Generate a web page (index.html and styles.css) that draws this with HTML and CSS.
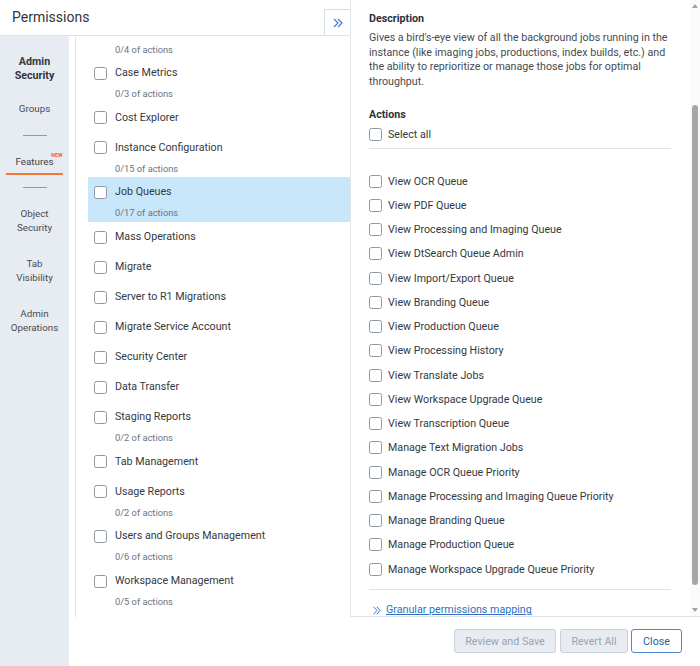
FILE: index.html
```html
<!DOCTYPE html>
<html lang="en">
<head>
<meta charset="utf-8">
<title>Permissions</title>
<link rel="stylesheet" href="styles.css">
</head>
<body>
<div class="app">
  <header class="top">
    <h1 class="title">Permissions</h1>
    <button class="collapse" aria-label="Collapse">
      <svg width="10" height="10" viewBox="0 0 10 10"><path d="M1 1 L5 5 L1 9 M5 1 L9 5 L5 9" fill="none" stroke="#3b78c6" stroke-width="1.1"/></svg>
    </button>
  </header>

  <nav class="side">
    <div class="side-head">Admin<br>Security</div>
    <div class="side-item">Groups</div>
    <div class="dash"></div>
    <div class="side-item active"><span class="feat">Features<span class="new">NEW</span></span></div>
    <div class="dash dash-after"></div>
    <div class="side-item two first-two">Object<br>Security</div>
    <div class="side-item two">Tab<br>Visibility</div>
    <div class="side-item two">Admin<br>Operations</div>
  </nav>

  <section class="listwrap">
    <div class="list">
      <div class="item partial"><div class="sub">0/4 of actions</div></div>
      <div class="item has-sub"><div class="row"><span class="cb"></span><span class="name">Case Metrics</span></div><div class="sub">0/3 of actions</div></div>
      <div class="item"><div class="row"><span class="cb"></span><span class="name">Cost Explorer</span></div></div>
      <div class="item has-sub"><div class="row"><span class="cb"></span><span class="name">Instance Configuration</span></div><div class="sub">0/15 of actions</div></div>
      <div class="item has-sub selected"><div class="row"><span class="cb"></span><span class="name">Job Queues</span></div><div class="sub">0/17 of actions</div></div>
      <div class="item"><div class="row"><span class="cb"></span><span class="name">Mass Operations</span></div></div>
      <div class="item"><div class="row"><span class="cb"></span><span class="name">Migrate</span></div></div>
      <div class="item"><div class="row"><span class="cb"></span><span class="name">Server to R1 Migrations</span></div></div>
      <div class="item"><div class="row"><span class="cb"></span><span class="name">Migrate Service Account</span></div></div>
      <div class="item"><div class="row"><span class="cb"></span><span class="name">Security Center</span></div></div>
      <div class="item"><div class="row"><span class="cb"></span><span class="name">Data Transfer</span></div></div>
      <div class="item has-sub"><div class="row"><span class="cb"></span><span class="name">Staging Reports</span></div><div class="sub">0/2 of actions</div></div>
      <div class="item"><div class="row"><span class="cb"></span><span class="name">Tab Management</span></div></div>
      <div class="item has-sub"><div class="row"><span class="cb"></span><span class="name">Usage Reports</span></div><div class="sub">0/2 of actions</div></div>
      <div class="item has-sub"><div class="row"><span class="cb"></span><span class="name">Users and Groups Management</span></div><div class="sub">0/6 of actions</div></div>
      <div class="item has-sub"><div class="row"><span class="cb"></span><span class="name">Workspace Management</span></div><div class="sub">0/5 of actions</div></div>
    </div>
  </section>

  <aside class="detail">
    <div class="detail-body">
      <div class="d-title">Description</div>
      <p class="d-text">Gives a bird's-eye view of all the background jobs running in the instance (like imaging jobs, productions, index builds, etc.) and the ability to reprioritize or manage those jobs for optimal throughput.</p>
      <div class="d-title a-title">Actions</div>
      <label class="act select"><span class="cb"></span>Select all</label>
      <div class="sep"></div>
      <div class="actions">
        <label class="act"><span class="cb"></span>View OCR Queue</label>
        <label class="act"><span class="cb"></span>View PDF Queue</label>
        <label class="act"><span class="cb"></span>View Processing and Imaging Queue</label>
        <label class="act"><span class="cb"></span>View DtSearch Queue Admin</label>
        <label class="act"><span class="cb"></span>View Import/Export Queue</label>
        <label class="act"><span class="cb"></span>View Branding Queue</label>
        <label class="act"><span class="cb"></span>View Production Queue</label>
        <label class="act"><span class="cb"></span>View Processing History</label>
        <label class="act"><span class="cb"></span>View Translate Jobs</label>
        <label class="act"><span class="cb"></span>View Workspace Upgrade Queue</label>
        <label class="act"><span class="cb"></span>View Transcription Queue</label>
        <label class="act"><span class="cb"></span>Manage Text Migration Jobs</label>
        <label class="act"><span class="cb"></span>Manage OCR Queue Priority</label>
        <label class="act"><span class="cb"></span>Manage Processing and Imaging Queue Priority</label>
        <label class="act"><span class="cb"></span>Manage Branding Queue</label>
        <label class="act"><span class="cb"></span>Manage Production Queue</label>
        <label class="act"><span class="cb"></span>Manage Workspace Upgrade Queue Priority</label>
      </div>
      <div class="sep sep2"></div>
      <a class="link" href="#">
        <svg width="8" height="9" viewBox="0 0 8 9"><path d="M0.6 0.8 L4 4.5 L0.6 8.2 M3.8 0.8 L7.2 4.5 L3.8 8.2" fill="none" stroke="#3a78c8" stroke-width="1"/></svg>
        <span>Granular permissions mapping</span>
      </a>
    </div>
    <div class="scrollbar">
      <span class="arrow up"></span>
      <span class="thumb"></span>
      <span class="arrow down"></span>
    </div>
  </aside>

  <footer class="foot">
    <button class="btn disabled w-review">Review and Save</button>
    <button class="btn disabled w-revert">Revert All</button>
    <button class="btn primary w-close">Close</button>
  </footer>
</div>
</body>
</html>
```

FILE: styles.css
```css
* { box-sizing: border-box; }

html, body {
  margin: 0;
  padding: 0;
  background: #ffffff;
}

body {
  font-family: Roboto, "Liberation Sans", Arial, sans-serif;
  font-size: 10.7px;
  color: #34393e;
}

.app {
  width: 700px;
  height: 666px;
  display: grid;
  grid-template-columns: 69px 281px 350px;
  grid-template-rows: 36px 581px 49px;
  overflow: hidden;
}

/* Header */
.top {
  grid-column: 1 / 3;
  grid-row: 1;
  display: flex;
  justify-content: space-between;
  border-bottom: 1px solid #dde2e9;
}

.title {
  margin: 0;
  padding-left: 12px;
  font-size: 14px;
  font-weight: 400;
  line-height: 34px;
  color: #32363b;
}

.collapse {
  align-self: flex-end;
  width: 26px;
  height: 26px;
  margin: 0;
  padding: 0;
  border: 1px solid #d7dde5;
  border-bottom: none;
  border-right: none;
  background: #ffffff;
  display: flex;
  align-items: center;
  justify-content: center;
}

.collapse svg { display: block; }

/* Sidebar */
.side {
  grid-column: 1;
  grid-row: 2 / 4;
  background: #e7ebf2;
  display: flex;
  flex-direction: column;
  align-items: center;
  text-align: center;
  padding-top: 18.5px;
  font-size: 9.8px;
  color: #474c52;
}

.side-head {
  font-size: 10.7px;
  font-weight: 700;
  line-height: 14px;
  color: #33373c;
}

.side-item {
  line-height: 14px;
  margin-top: 19.5px;
}

.dash {
  width: 24px;
  height: 1px;
  background: #959ba3;
  margin-top: 19px;
}

.dash-after { margin-top: 12px; }

.side-item.active {
  width: 57px;
  margin-top: 19px;
  padding-bottom: 4px;
  border-bottom: 2px solid #f2783a;
}

.feat {
  position: relative;
  color: #3c4147;
}

.new {
  position: absolute;
  right: -9px;
  top: -4px;
  font-size: 5.2px;
  line-height: 6px;
  font-weight: 700;
  color: #f0632a;
}

.side-item.two { margin-top: 22px; }
.side-item.first-two { margin-top: 19px; }

/* Middle list */
.listwrap {
  grid-column: 2;
  grid-row: 2;
  padding-left: 6px;
}

.list {
  height: 100%;
  border-left: 1px solid #dfe3ea;
  padding-left: 12px;
  overflow: hidden;
}

.item {
  padding: 7px 0 7px 6px;
}

.item.has-sub { padding-bottom: 1.7px; }

.item.partial {
  padding: 1px 0 1px 6px;
}

.item.partial .sub { margin-top: 6px; }

.item.selected { background: #c9e7fb; }

.row {
  display: flex;
  align-items: center;
  gap: 8px;
  height: 16px;
}

.cb {
  flex: none;
  width: 13px;
  height: 13px;
  border: 1px solid #8f99a5;
  border-radius: 2.5px;
  background: #ffffff;
}

.name {
  line-height: 16px;
  color: #34393e;
}

.sub {
  margin: 6px 0 0 21px;
  font-size: 9.3px;
  line-height: 14px;
  color: #6c747d;
}

/* Detail panel */
.detail {
  grid-column: 3;
  grid-row: 1 / 3;
  border-left: 1px solid #dfe3ea;
  border-bottom: 1px solid #dfe3ea;
  display: flex;
}

.detail-body {
  flex: 1;
  padding: 12px 19px 0 18px;
}

.d-title {
  font-weight: 700;
  line-height: 14px;
  color: #2d3136;
}

.d-text {
  margin: 5px 0 0;
  line-height: 14.6px;
  color: #464b51;
}

.a-title { margin-top: 18.6px; }

.act {
  display: flex;
  align-items: center;
  gap: 6px;
  height: 24.25px;
  color: #34393e;
}

.act.select {
  height: 16px;
  margin-top: 5px;
}

.sep {
  height: 1px;
  background: #dfe3e9;
  margin-top: 5px;
}

.actions { margin-top: 20px; }

.sep2 { margin-top: 8px; }

.link {
  display: flex;
  align-items: center;
  gap: 5px;
  margin-top: 13px;
  padding-left: 4px;
  line-height: 14px;
  color: #2f6fc2;
}

.link svg { flex: none; }
.link span { text-decoration: underline; }

/* Scrollbar */
.scrollbar {
  width: 10px;
  display: flex;
  flex-direction: column;
  align-items: center;
  background: #fafafa;
}

.arrow {
  width: 0;
  height: 0;
  border-left: 3px solid transparent;
  border-right: 3px solid transparent;
}

.arrow.up {
  margin-top: 4px;
  border-bottom: 4px solid #a3a3a3;
}

.thumb {
  width: 6px;
  height: 480px;
  margin-top: 97px;
  border-radius: 3px;
  background: #a6a6a6;
}

.arrow.down {
  margin-top: auto;
  margin-bottom: 4px;
  border-top: 4px solid #a3a3a3;
}

/* Footer */
.foot {
  grid-column: 2 / 4;
  grid-row: 3;
  display: flex;
  justify-content: flex-end;
  align-items: flex-start;
  padding: 12px 18px 0 0;
}

.btn {
  height: 24px;
  padding: 0;
  border-radius: 3px;
  font-family: inherit;
  font-size: 10.7px;
  border: 1px solid #c8d0da;
}

.btn.disabled {
  background: #e8ecf2;
  color: #9aa3ae;
}

.btn.primary {
  background: #ffffff;
  border-color: #4f86cc;
  color: #2c5d9b;
}

.w-review { width: 102px; }
.w-revert { width: 68px; margin-left: 4px; }
.w-close { width: 51px; margin-left: 3px; }
```
